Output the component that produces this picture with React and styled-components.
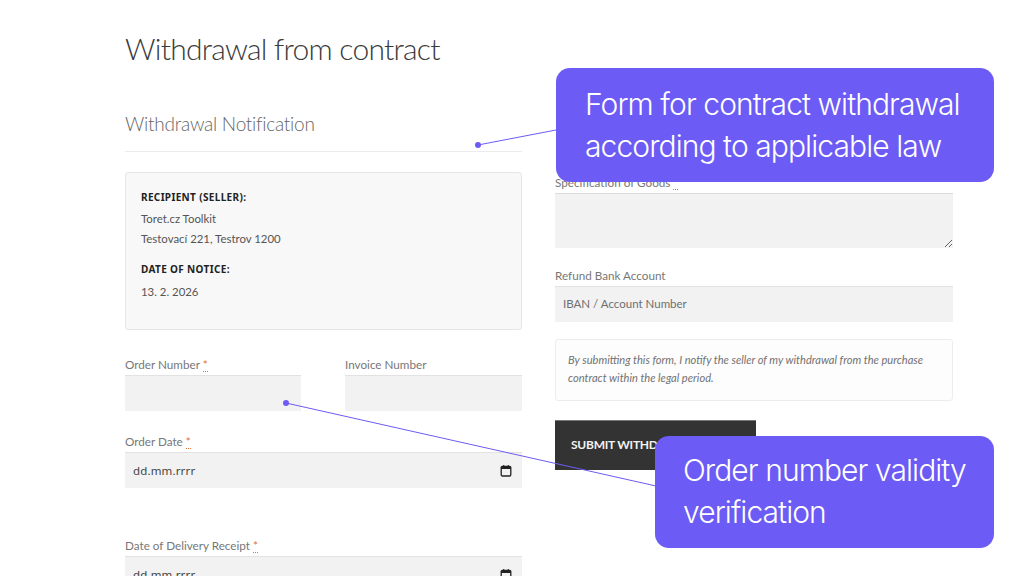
import React from 'react';
import styled, { createGlobalStyle } from 'styled-components';

const GlobalStyle = createGlobalStyle`
  html, body {
    margin: 0;
    padding: 0;
    background: #fff;
  }
  * {
    box-sizing: border-box;
  }
`;

const Page = styled.div`
  position: relative;
  width: 1024px;
  height: 576px;
  overflow: hidden;
  padding: 0 71px 0 125px;
  background: #fff;
  font-family: Lato, "Noto Sans", "Liberation Sans", sans-serif;
  color: #6d6d6d;
`;

const Title = styled.h1`
  margin: 0;
  padding-top: 26px;
  height: 100px;
  font-weight: 300;
  font-size: 30px;
  line-height: 44px;
  letter-spacing: -0.75px;
  color: #3a3a3a;
`;

const Columns = styled.div`
  display: grid;
  grid-template-columns: 397px 398px;
  column-gap: 33px;
`;

const Column = styled.div`
  display: flex;
  flex-direction: column;
`;

const SectionTitle = styled.h2`
  margin: 0 0 20px;
  height: 52px;
  padding-top: 11px;
  border-bottom: 1px solid #ececec;
  font-weight: 300;
  font-size: 19px;
  line-height: 26px;
  letter-spacing: -0.25px;
  color: #666;
`;

const InfoBox = styled.div`
  height: 158px;
  padding: 17px 15px 0;
  margin-bottom: 27px;
  background: #f8f8f8;
  border: 1px solid #e6e6e6;
  border-radius: 3px;
`;

const InfoHeading = styled.div`
  margin-bottom: ${p => p.$gap}px;
  font-family: "Noto Sans", sans-serif;
  font-size: 10px;
  line-height: 14px;
  font-weight: 700;
  letter-spacing: 0.35px;
  color: #222;
`;

const InfoLine = styled.div`
  font-size: 11.4px;
  line-height: 20px;
  color: #555;
  margin-bottom: ${p => p.$gap || 0}px;
`;

const TwoFields = styled.div`
  display: grid;
  grid-template-columns: 176px 177px;
  column-gap: 44px;
`;

const Field = styled.div`
  display: flex;
  flex-direction: column;
  margin-bottom: ${p => p.$gap || 0}px;
`;

const Label = styled.label`
  height: 18px;
  font-size: 11.7px;
  line-height: 14px;
  color: #777;
`;

const Required = styled.span`
  color: #d9733a;
  border-bottom: 1px dotted #d9733a;
`;

const TextInput = styled.input`
  display: block;
  width: 100%;
  height: 36px;
  padding: 0 8px 2px;
  border: 0;
  border-top: 1px solid #e2e2e2;
  border-radius: 0;
  outline: 0;
  background: #f2f2f2;
  font-family: inherit;
  font-size: 11.5px;
  color: #555;
  &::placeholder {
    color: #6f6f6f;
    opacity: 1;
  }
`;

const DateBox = styled.div`
  display: flex;
  align-items: center;
  justify-content: space-between;
  height: 36px;
  padding: 0 10px 0 8px;
  border-top: 1px solid #e2e2e2;
  background: #f2f2f2;
  font-family: "Noto Sans", sans-serif;
  font-size: 11.5px;
  letter-spacing: 0.15px;
  color: #444;
`;

const TextArea = styled.textarea`
  display: block;
  width: 100%;
  height: 55px;
  margin: 0;
  padding: 8px;
  border: 0;
  border-top: 1px solid #dcdcdc;
  border-radius: 0;
  outline: 0;
  background: #f2f2f2;
`;

const HiddenSpacer = styled.div`
  height: 75px;
`;

const Note = styled.div`
  height: 62px;
  margin-bottom: 19px;
  padding: 11px 12px 0;
  background: #fdfdfd;
  border: 1px solid #ededed;
  border-radius: 3px;
  font-size: 11.1px;
  line-height: 18px;
  font-style: italic;
  color: #727272;
`;

const SubmitButton = styled.button`
  width: 201px;
  height: 50px;
  padding: 0 0 2px 16px;
  border: 0;
  border-top: 1px solid #777;
  background: #333;
  font-family: inherit;
  font-size: 12px;
  font-weight: 700;
  letter-spacing: -0.25px;
  color: #f2f2f2;
  text-align: left;
  white-space: nowrap;
`;

const Connectors = styled.svg`
  position: absolute;
  top: 0;
  left: 0;
  pointer-events: none;
`;

const Callout = styled.div`
  position: absolute;
  top: ${p => p.$top}px;
  left: ${p => p.$left}px;
  width: ${p => p.$width}px;
  height: ${p => p.$height}px;
  padding: ${p => p.$pad}px 0 0 ${p => p.$inset}px;
  background: #6c5bf5;
  border-radius: 14px;
  font-family: Inter, "Liberation Sans", sans-serif;
  font-weight: 300;
  font-size: 30px;
  line-height: 42px;
  letter-spacing: -0.92px;
  color: #fff;
  white-space: nowrap;
`;

const CalendarIcon = () => (
  <svg width="12" height="12" viewBox="0 0 12 12" fill="none">
    <rect x="1.2" y="1.4" width="9.6" height="9.6" rx="1.2" stroke="#222" strokeWidth="1.3" />
    <rect x="1.2" y="1.4" width="9.6" height="2.6" fill="#222" />
    <rect x="3" y="0.2" width="1.3" height="1.6" fill="#222" />
    <rect x="7.7" y="0.2" width="1.3" height="1.6" fill="#222" />
  </svg>
);

const Req = () => <Required>*</Required>;

const App = () => (
  <>
    <GlobalStyle />
    <Page>
      <Title>Withdrawal from contract</Title>
      <Columns>
        <Column>
          <SectionTitle>Withdrawal Notification</SectionTitle>
          <InfoBox>
            <InfoHeading $gap={5}>RECIPIENT (SELLER):</InfoHeading>
            <InfoLine>Toret.cz Toolkit</InfoLine>
            <InfoLine $gap={13}>Testovací 221, Testrov 1200</InfoLine>
            <InfoHeading $gap={6}>DATE OF NOTICE:</InfoHeading>
            <InfoLine>13. 2. 2026</InfoLine>
          </InfoBox>
          <TwoFields>
            <Field $gap={23}>
              <Label>Order Number <Req /></Label>
              <TextInput />
            </Field>
            <Field $gap={23}>
              <Label>Invoice Number</Label>
              <TextInput />
            </Field>
          </TwoFields>
          <Field $gap={50}>
            <Label>Order Date <Req /></Label>
            <DateBox>dd.mm.rrrr<CalendarIcon /></DateBox>
          </Field>
          <Field>
            <Label>Date of Delivery Receipt <Req /></Label>
            <DateBox>dd.mm.rrrr<CalendarIcon /></DateBox>
          </Field>
        </Column>
        <Column>
          <HiddenSpacer />
          <Field $gap={20}>
            <Label>Specification of Goods <Req /></Label>
            <TextArea />
          </Field>
          <Field $gap={17}>
            <Label>Refund Bank Account</Label>
            <TextInput placeholder="IBAN / Account Number" />
          </Field>
          <Note>
            By submitting this form, I notify the seller of my withdrawal from the purchase contract within the legal period.
          </Note>
          <SubmitButton>SUBMIT WITHDRAWAL</SubmitButton>
        </Column>
      </Columns>
      <Connectors width="1024" height="576" viewBox="0 0 1024 576">
        <line x1="478" y1="145" x2="556" y2="130" stroke="#6c5bf5" strokeWidth="1" />
        <circle cx="478" cy="145" r="3" fill="#6c5bf5" />
        <line x1="286" y1="403" x2="656" y2="486" stroke="#6c5bf5" strokeWidth="1" />
        <circle cx="286" cy="403" r="3" fill="#6c5bf5" />
      </Connectors>
      <Callout $top={68} $left={556} $width={438} $height={114} $inset={29} $pad={15}>
        Form for contract withdrawal<br />according to applicable law
      </Callout>
      <Callout $top={436} $left={655} $width={339} $height={112} $inset={28} $pad={13}>
        Order number validity<br />verification
      </Callout>
    </Page>
  </>
);

export default App;
